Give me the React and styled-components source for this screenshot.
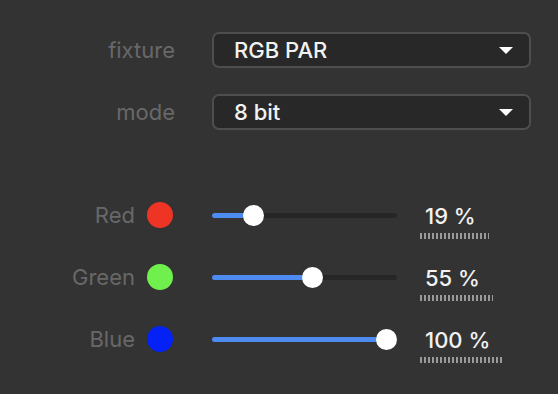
import React, { useState } from "react";
import styled, { createGlobalStyle } from "styled-components";

const GlobalStyle = createGlobalStyle`
  html, body {
    margin: 0;
    padding: 0;
    background: #333333;
  }
  body {
    font-family: "Inter", "Liberation Sans", sans-serif;
  }
`;

const channels = [
  { name: "Red", color: "#ee3424", value: 19 },
  { name: "Green", color: "#6ff04d", value: 55 },
  { name: "Blue", color: "#0422f5", value: 100 },
];

const App = () => {
  const [fixture] = useState("RGB PAR");
  const [mode] = useState("8 bit");

  return (
    <Container>
      <GlobalStyle />
      <Form>
        <Row>
          <Label>fixture</Label>
          <Select>
            <span>{fixture}</span>
            <Arrow />
          </Select>
        </Row>
        <Row>
          <Label>mode</Label>
          <Select>
            <span>{mode}</span>
            <Arrow />
          </Select>
        </Row>

        <Channels>
          {channels.map(({ name, color, value }) => (
            <Row key={name}>
              <Label>
                {name}
                <Dot color={color} />
              </Label>
              <SliderRow>
                <Track>
                  <Fill style={{ width: `${10 + value * 1.64}px` }} />
                  <Thumb style={{ left: `${value * 1.64}px` }} />
                </Track>
                <Value>{value} %</Value>
              </SliderRow>
            </Row>
          ))}
        </Channels>
      </Form>
    </Container>
  );
};

export default App;

const Container = styled.div`
  width: 558px;
  height: 394px;
  background: #333333;
  overflow: hidden;
`;

const Form = styled.div`
  display: flex;
  flex-direction: column;
  gap: 26px;
  padding-top: 32px;
`;

const Channels = styled.div`
  display: flex;
  flex-direction: column;
  gap: 26px;
  margin-top: 41px;
`;

const Row = styled.div`
  display: grid;
  grid-template-columns: 175px 319px;
  column-gap: 37px;
  align-items: center;
  height: 36px;
`;

const Label = styled.div`
  display: flex;
  justify-content: flex-end;
  align-items: center;
  gap: 12px;
  color: #686868;
  font-size: 22px;
`;

const Dot = styled.span`
  width: 26px;
  height: 26px;
  border-radius: 50%;
  background: ${(p) => p.color};
  margin-right: 2px;
`;

const Select = styled.div`
  box-sizing: border-box;
  height: 36px;
  display: flex;
  align-items: center;
  justify-content: space-between;
  padding: 0 16px 0 20px;
  background: #282828;
  border: 2px solid #4e4e4e;
  border-radius: 7px;
  color: #f2f2f2;
  font-size: 22px;
  font-weight: 500;
`;

const Arrow = styled.span`
  width: 0;
  height: 0;
  border-left: 7px solid transparent;
  border-right: 7px solid transparent;
  border-top: 7px solid #ffffff;
`;

const SliderRow = styled.div`
  display: flex;
  align-items: center;
  gap: 23px;
`;

const Track = styled.div`
  position: relative;
  width: 185px;
  height: 5px;
  border-radius: 3px;
  background: #262626;
`;

const Fill = styled.div`
  height: 100%;
  border-radius: 3px;
  background: #4d8bf0;
`;

const Thumb = styled.div`
  position: absolute;
  top: -8px;
  width: 21px;
  height: 21px;
  border-radius: 50%;
  background: #ffffff;
`;

const Value = styled.div`
  position: relative;
  padding: 0 13px 0 5px;
  color: #f2f2f2;
  font-size: 22px;
  font-weight: 500;
  white-space: nowrap;
  margin-top: 2px;

  &::after {
    content: "";
    position: absolute;
    left: 0;
    right: 0;
    bottom: -10px;
    height: 6px;
    background: repeating-linear-gradient(
      90deg,
      #9a9a9a 0 2px,
      transparent 2px 4px
    );
  }
`;
